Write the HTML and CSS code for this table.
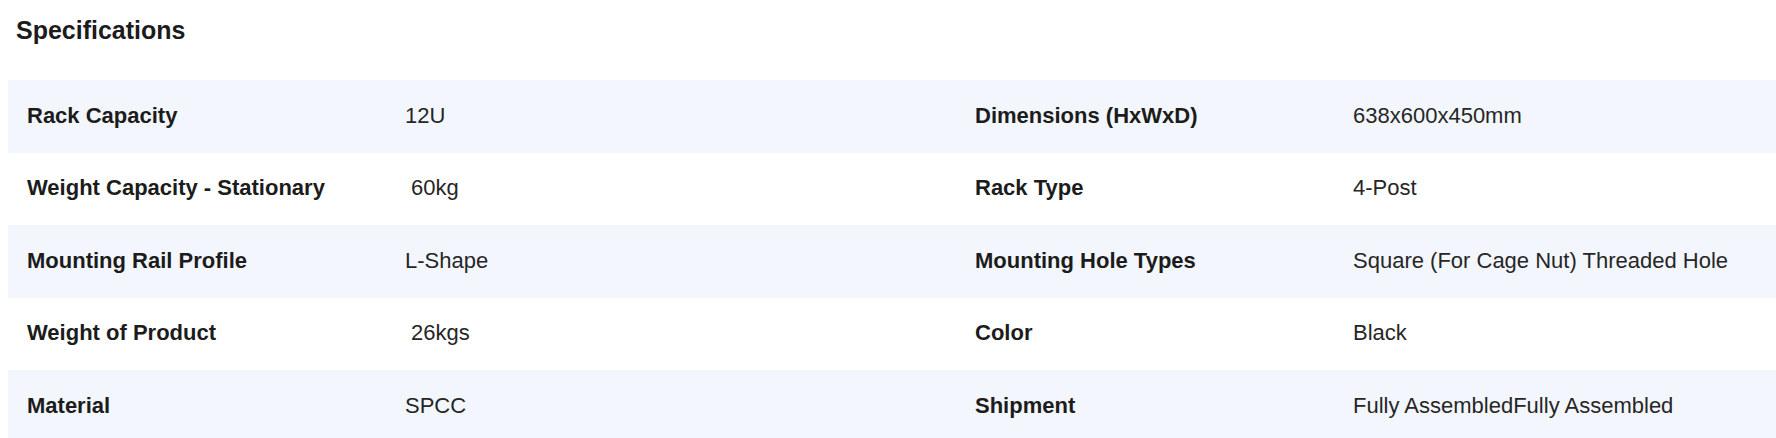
FILE: index.html
```html
<!DOCTYPE html>
<html lang="en">
<head>
<meta charset="utf-8">
<title>Specifications</title>
<link rel="stylesheet" href="styles.css">
</head>
<body>
<section class="specs">
  <h2 class="specs-title">Specifications</h2>
  <div class="specs-table">
    <div class="spec-row shaded">
      <div class="spec-label">Rack Capacity</div>
      <div class="spec-value">12U</div>
      <div class="spec-label">Dimensions (HxWxD)</div>
      <div class="spec-value">638x600x450mm</div>
    </div>
    <div class="spec-row">
      <div class="spec-label">Weight Capacity - Stationary</div>
      <div class="spec-value">&nbsp;60kg</div>
      <div class="spec-label">Rack Type</div>
      <div class="spec-value">4-Post</div>
    </div>
    <div class="spec-row shaded">
      <div class="spec-label">Mounting Rail Profile</div>
      <div class="spec-value">L-Shape</div>
      <div class="spec-label">Mounting Hole Types</div>
      <div class="spec-value">Square (For Cage Nut) Threaded Hole</div>
    </div>
    <div class="spec-row">
      <div class="spec-label">Weight of Product</div>
      <div class="spec-value">&nbsp;26kgs</div>
      <div class="spec-label">Color</div>
      <div class="spec-value">Black</div>
    </div>
    <div class="spec-row shaded">
      <div class="spec-label">Material</div>
      <div class="spec-value">SPCC</div>
      <div class="spec-label">Shipment</div>
      <div class="spec-value">Fully AssembledFully Assembled</div>
    </div>
  </div>
</section>
</body>
</html>
```

FILE: styles.css
```css
html, body {
  margin: 0;
  padding: 0;
  background: #ffffff;
}

body {
  font-family: "Liberation Sans", Arial, sans-serif;
  color: #1f1f1f;
  overflow: hidden;
}

.specs {
  padding: 16px 0 0 8px;
}

.specs-title {
  margin: 0 0 36px 8px;
  font-size: 25px;
  font-weight: 700;
  line-height: 28px;
  color: #1c1c1c;
}

.specs-table {
  display: flex;
  flex-direction: column;
}

.spec-row {
  display: grid;
  grid-template-columns: 378px 570px 378px 1fr;
  height: 72.5px;
  align-items: center;
  font-size: 22px;
  line-height: 33px;
  padding-bottom: 2px;
  box-sizing: border-box;
}

.spec-row.shaded {
  background: #f3f7fd;
}

.spec-label,
.spec-value {
  padding-left: 19px;
  white-space: nowrap;
}

.spec-label {
  font-weight: 700;
  color: #1c1c1c;
}

.spec-value {
  font-weight: 400;
  color: #262626;
}
```
